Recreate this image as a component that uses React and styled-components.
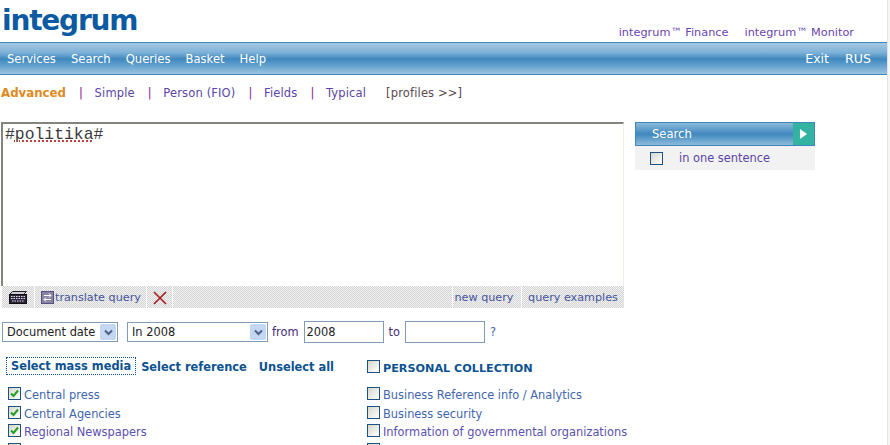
import React from "react";
import styled, { createGlobalStyle } from "styled-components";

const Global = createGlobalStyle`
  html, body { margin: 0; padding: 0; background: #fff; overflow: hidden; }
  body { font-family: "DejaVu Sans", Verdana, sans-serif; font-size: 11.4px; }
`;
const Window = styled.div`
  width: 890px; height: 445px; display: flex; overflow: hidden;
`;
const Page = styled.div`
  width: 887px; height: 445px; overflow: hidden; display: flex; flex-direction: column; flex: none;
  & > * { flex: none; }
`;
const Edge = styled.div`
  width: 3px; height: 445px; flex: none; box-sizing: border-box; border-left: 1px solid #dfe3ea; background: #f6f6f2;
`;
const Top = styled.div`
  height: 42px; display: flex; justify-content: space-between; align-items: flex-start;
`;
const Logo = styled.div`
  font: bold 28px/41px "DejaVu Sans", sans-serif; color: #0b5aa2; padding-left: 2px; letter-spacing: -1.2px;
`;
const TopLinks = styled.div`
  display: flex; gap: 16px; padding: 25px 33px 0 0; color: #6a45b0; line-height: 15px; font-size: 11.3px;
`;
const Bar = styled.div`
  height: 31px; border-top: 1px solid #3f86bd; border-bottom: 1px solid #3f86bd; box-sizing: content-box;
  background: linear-gradient(#a4c8e2 0%, #7fb2d8 30%, #3f88be 52%, #6ea8d2 78%, #9dc4e0 100%);
  display: flex; justify-content: space-between; align-items: center; color: #fff;
`;
const BarGroup = styled.div`
  display: flex; gap: ${p => p.$gap}px; padding: 0 16px 0 7px; font-size: ${p => p.$size}px;
`;
const Tabs = styled.div`
  height: 36px; display: flex; align-items: center; padding-left: 1px; font-size: 11.5px; letter-spacing: 0.15px;
`;
const Tab = styled.span`
  color: ${p => (p.$active ? "#e08a1e" : "#5b45a8")};
  font-weight: ${p => (p.$active ? "bold" : "normal")};
  font-size: ${p => (p.$active ? "11.8px" : "inherit")};
  letter-spacing: ${p => (p.$active ? "0" : "inherit")};
`;
const Sep = styled.span`
  color: #8c1a8c; margin: 0 11.5px 0 13px;
`;
const Profiles = styled.span`
  color: #5a4a50; margin-left: 20px;
`;
const Main = styled.div`
  display: flex; gap: 11px; padding: 11px 0 0 1px; align-items: flex-start;
`;
const Editor = styled.div`
  width: 623px;
`;
const Query = styled.div`
  height: 164px; box-sizing: border-box; border: 2px solid #85847c; border-bottom: 0; border-right: 1px solid #f0efe6;
  font: 16.4px/20px "Liberation Mono", monospace; padding: 1px 2px; color: #3a3a3a;
`;
const Wavy = styled.span`
  text-decoration: underline dotted #b01818;
  text-underline-offset: 2px;
`;
const Tools = styled.div`
  height: 22px; display: flex; gap: 1px; margin-left: 1px;
`;
const Tool = styled.div`
  display: flex; align-items: center; justify-content: ${p => (p.$start ? "flex-start" : "center")}; gap: 1px; height: 100%; color: #45549f;
  padding: 1px ${p => p.$pr || 0}px 0 ${p => (p.$start ? 6 : 0)}px; box-sizing: border-box; font-size: 11.2px;
  width: ${p => (p.$w ? `${p.$w}px` : "auto")};
  background: repeating-conic-gradient(#d4d4d4 0 25%, #f2f2f2 0 50%) 0 0 / 2px 2px;
  flex: ${p => (p.$w ? "none" : 1)};
`;
const Side = styled.div`
  width: 180px; display: flex; flex-direction: column;
`;
const SearchBtn = styled.div`
  height: 24px; box-sizing: border-box; border: 1px solid #3f86bd; display: flex; justify-content: space-between; align-items: center;
  background: linear-gradient(#8dbbdc, #3f88be 50%, #8dbbdc); color: #fff; font-size: 11.6px; padding-left: 16px;
`;
const Go = styled.div`
  width: 21px; height: 100%; background: #35b3a2; display: flex; align-items: center; justify-content: center;
`;
const Sentence = styled.div`
  height: 24px; background: #f2f2f2; display: flex; align-items: center; gap: 16px; padding-left: 15px; color: #5b45a8;
`;
const Box = styled.span`
  width: 13px; height: 13px; box-sizing: border-box; border: 1px solid #1c5180; flex: none;
  background: linear-gradient(135deg, #d6d6ce, #fff); display: inline-flex; align-items: center; justify-content: center;
`;
const DateRow = styled.div`
  display: flex; align-items: center; padding: 13px 0 0 2px; height: 22px; color: #4a2a7a;
`;
const Select = styled.div`
  width: ${p => p.$w}px; height: 20px; border: 1px solid #7f9db9; display: flex; justify-content: space-between; align-items: center;
  padding: 0 1px 0 4px; box-sizing: border-box; color: #222; margin-right: ${p => p.$mr}px;
`;
const Arrow = styled.span`
  width: 16px; height: 16px; background: #c3d7f3; display: flex; align-items: center; justify-content: center; border-radius: 2px;
`;
const Input = styled.div`
  width: 80px; height: 22px; border: 1px solid #7f9db9; box-sizing: border-box; padding: 0 2px; line-height: 20px; color: #222;
  margin: 0 5px;
`;
const Help = styled.span`
  color: #3f66ae;
`;
const Lists = styled.div`
  display: flex; padding: 14px 0 0 6px;
`;
const Left = styled.div`
  width: 361px;
`;
const Links = styled.div`
  display: flex; align-items: center; font-weight: bold; color: #0d5290; height: 18px; gap: 12px;
`;
const Focus = styled.span`
  border: 1px dotted #0d5290; padding: 1px 4px 0 4px; line-height: 15px; margin-right: -7px;
`;
const LinkText = styled.span`
  padding-top: 1px;
`;
const Rows = styled.div`
  padding: 9px 0 0 ${p => p.$indent}px; display: flex; flex-direction: column;
`;
const Row = styled.div`
  display: flex; align-items: center; gap: 3px; height: 18.7px; color: ${p => p.$c || "#3f66ae"};
`;
const RowText = styled.span`
  margin-top: 3px;
`;
const Heading = styled.div`
  display: flex; align-items: center; gap: 3px; height: 18px; font-weight: bold; color: #0d5290; font-size: 11.2px;
`;
const HeadingText = styled.span`
  margin-top: 4px;
`;
const Tick = () => (
  <svg width="11" height="11" viewBox="0 0 11 11"><path d="M2 5.5 4.5 8 9 2.5" fill="none" stroke="#21a121" strokeWidth="2" /></svg>
);
const Chevron = () => (
  <svg width="9" height="7" viewBox="0 0 9 7"><path d="M1 1.5 4.5 5 8 1.5" fill="none" stroke="#4d6185" strokeWidth="2" /></svg>
);

export default function App() {
  return (
    <Window>
      <Global />
      <Page>
        <Top>
          <Logo>integrum</Logo>
          <TopLinks><span>integrum™ Finance</span><span>integrum™ Monitor</span></TopLinks>
        </Top>
        <Bar>
          <BarGroup $gap={15} $size={11.6}><span>Services</span><span>Search</span><span>Queries</span><span>Basket</span><span>Help</span></BarGroup>
          <BarGroup $gap={16} $size={12.6}><span>Exit</span><span>RUS</span></BarGroup>
        </Bar>
        <Tabs>
          <Tab $active>Advanced</Tab><Sep>|</Sep><Tab>Simple</Tab><Sep>|</Sep><Tab>Person (FIO)</Tab><Sep>|</Sep><Tab>Fields</Tab><Sep>|</Sep><Tab>Typical</Tab><Profiles>[profiles &gt;&gt;]</Profiles>
        </Tabs>
        <Main>
          <Editor>
            <Query>#<Wavy>politika</Wavy>#</Query>
            <Tools>
              <Tool $w={32}>
                <svg width="18" height="13" viewBox="0 0 18 13"><path d="M3.5.5h14l-3 3h-14z" fill="#cfc7da" stroke="#222" /><rect x="0.5" y="3.5" width="17" height="9" fill="#2c2438" stroke="#111" /><path d="M2 5.5h14M2 7.5h14M3 10h12" stroke="#e4dff0" strokeDasharray="1.5 1" /></svg>
              </Tool>
              <Tool $w={111} $start>
                <svg width="13" height="13" viewBox="0 0 13 13"><rect x="0.5" y="0.5" width="12" height="12" fill="#8a84a4" stroke="#55507a" /><path d="M3 4.5h7M8 2.5l2 2-2 2M10 8.5H3M5 6.5l-2 2 2 2" fill="none" stroke="#fff" /></svg>
                translate query
              </Tool>
              <Tool $w={25}>
                <svg width="14" height="14" viewBox="0 0 14 14"><path d="M1 1 13 13M13 1 1 13" stroke="#a81c1c" strokeWidth="1.6" /></svg>
              </Tool>
              <Tool />
              <Tool $w={68} $pr={6}>new query</Tool>
              <Tool $w={102}>query examples</Tool>
            </Tools>
          </Editor>
          <Side>
            <SearchBtn>Search<Go><svg width="7" height="10" viewBox="0 0 7 10"><path d="M0 0 7 5 0 10z" fill="#fff" /></svg></Go></SearchBtn>
            <Sentence><Box />in one sentence</Sentence>
          </Side>
        </Main>
        <DateRow>
          <Select $w={116} $mr={9}>Document date<Arrow><Chevron /></Arrow></Select>
          <Select $w={141} $mr={4}>In 2008<Arrow><Chevron /></Arrow></Select>
          from<Input>2008</Input>to<Input /><Help>?</Help>
        </DateRow>
        <Lists>
          <Left>
            <Links><Focus>Select mass media</Focus><LinkText>Select reference</LinkText><LinkText>Unselect all</LinkText></Links>
            <Rows $indent={2}>
              <Row><Box><Tick /></Box><RowText>Central press</RowText></Row>
              <Row><Box><Tick /></Box><RowText>Central Agencies</RowText></Row>
              <Row $c="#5b50ae"><Box><Tick /></Box><RowText>Regional Newspapers</RowText></Row>
              <Row><Box /></Row>
            </Rows>
          </Left>
          <div>
            <Heading><Box /><HeadingText>PERSONAL COLLECTION</HeadingText></Heading>
            <Rows $indent={0}>
              <Row><Box /><RowText>Business Reference info / Analytics</RowText></Row>
              <Row><Box /><RowText>Business security</RowText></Row>
              <Row $c="#5b50ae"><Box /><RowText>Information of governmental organizations</RowText></Row>
              <Row><Box /></Row>
            </Rows>
          </div>
        </Lists>
      </Page>
      <Edge />
    </Window>
  );
}
